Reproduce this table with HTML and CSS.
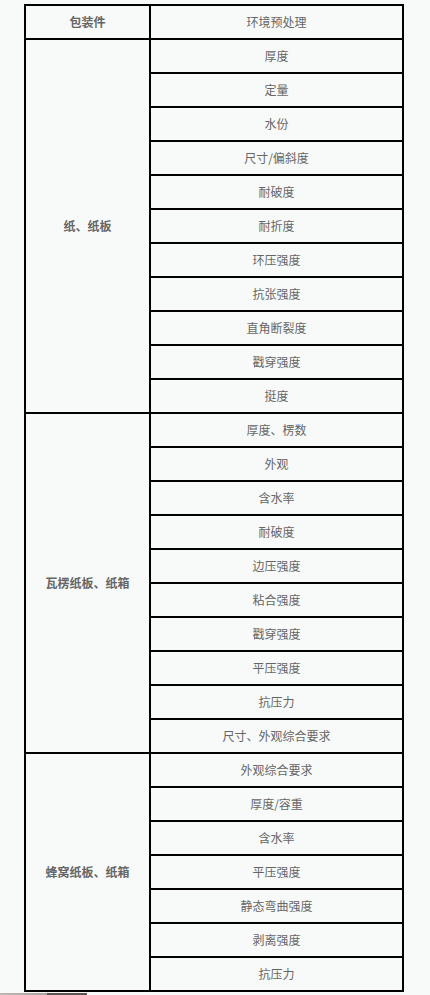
FILE: index.html
```html
<!DOCTYPE html>
<html lang="zh">
<head>
<meta charset="utf-8">
<title>包装件</title>
<link rel="stylesheet" href="styles.css">
</head>
<body>
<table class="spec">
  <colgroup><col class="c1"><col class="c2"></colgroup>
  <tr><td class="head">包装件</td><td>环境预处理</td></tr>
  <tr><td class="group" rowspan="11">纸、纸板</td><td>厚度</td></tr>
  <tr><td>定量</td></tr>
  <tr><td>水份</td></tr>
  <tr><td>尺寸/偏斜度</td></tr>
  <tr><td>耐破度</td></tr>
  <tr><td>耐折度</td></tr>
  <tr><td>环压强度</td></tr>
  <tr><td>抗张强度</td></tr>
  <tr><td>直角断裂度</td></tr>
  <tr><td>戳穿强度</td></tr>
  <tr><td>挺度</td></tr>
  <tr><td class="group" rowspan="10">瓦楞纸板、纸箱</td><td>厚度、楞数</td></tr>
  <tr><td>外观</td></tr>
  <tr><td>含水率</td></tr>
  <tr><td>耐破度</td></tr>
  <tr><td>边压强度</td></tr>
  <tr><td>粘合强度</td></tr>
  <tr><td>戳穿强度</td></tr>
  <tr><td>平压强度</td></tr>
  <tr><td>抗压力</td></tr>
  <tr><td>尺寸、外观综合要求</td></tr>
  <tr><td class="group" rowspan="7">蜂窝纸板、纸箱</td><td>外观综合要求</td></tr>
  <tr><td>厚度/容重</td></tr>
  <tr><td>含水率</td></tr>
  <tr><td>平压强度</td></tr>
  <tr><td>静态弯曲强度</td></tr>
  <tr><td>剥离强度</td></tr>
  <tr><td>抗压力</td></tr>
</table>
<div class="strip"><span class="s1"></span><span class="s2"></span></div>
</body>
</html>
```

FILE: styles.css
```css
html, body {
  margin: 0;
  padding: 0;
  background: #f8faf9;
}
body {
  font-family: "Noto Sans CJK SC", "Liberation Sans", sans-serif;
  font-size: 12px;
  color: #666;
  overflow: hidden;
}
.spec {
  margin: 4px 0 0 24px;
  border-collapse: separate;
  border-spacing: 0;
  border-left: 2px solid #000;
  border-top: 2px solid #000;
  table-layout: fixed;
  width: 380px;
}
.c1 { width: 125px; }
.c2 { width: 253px; }
.spec td {
  padding: 0;
  line-height: 32px;
  height: 32px;
  text-align: center;
  vertical-align: middle;
  border-right: 2px solid #000;
  border-bottom: 2px solid #000;
  white-space: nowrap;
}
.spec td.head,
.spec td.group {
  font-weight: bold;
}
.strip {
  display: flex;
  margin-top: 1px;
  height: 4px;
}
.s1 {
  width: 47px;
  background: linear-gradient(to right, #bdb8b3, #a9a49f);
}
.s2 {
  width: 40px;
  background: #5b5551;
}
```
